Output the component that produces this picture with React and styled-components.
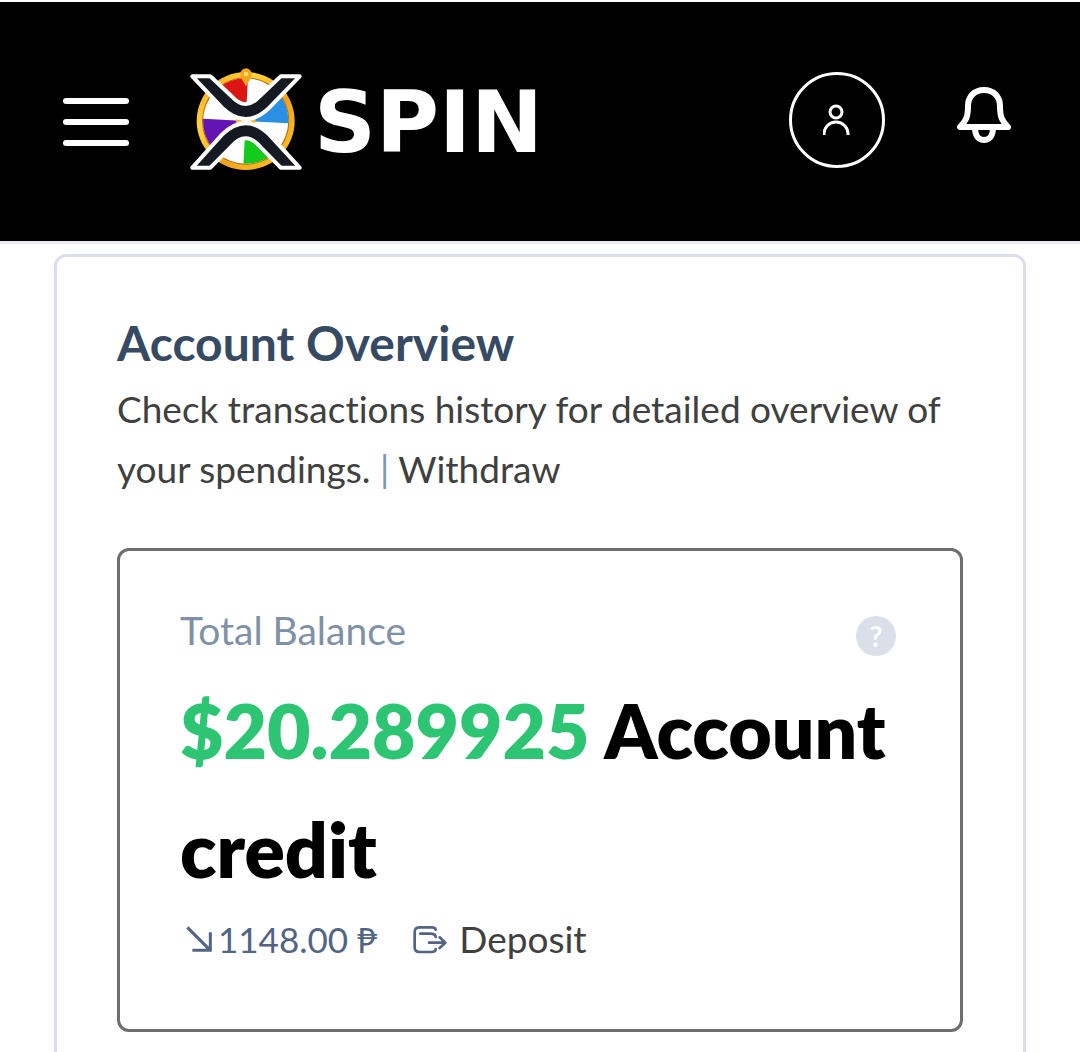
import styled, { createGlobalStyle } from "styled-components";

export default function App(){
    return(
        <>
            <GlobalStyle/>
            <Header>
                <MenuButton aria-label="Menu">
                    <Bar/>
                    <Bar/>
                    <Bar/>
                </MenuButton>
                <Brand href="#home">
                    <WheelLogo/>
                    <BrandName>SPIN</BrandName>
                </Brand>
                <UserButton aria-label="Account">
                    <UserIcon/>
                </UserButton>
                <BellButton aria-label="Notifications">
                    <BellIcon/>
                </BellButton>
            </Header>

            <Overview>
                <Title>Account Overview</Title>
                <Description>
                    Check transactions history for detailed overview of your spendings. <Divider>|</Divider> <TextLink href="#withdraw">Withdraw</TextLink>
                </Description>

                <BalanceCard>
                    <BalanceHead>
                        <Label>Total Balance</Label>
                        <HelpButton aria-label="Help">?</HelpButton>
                    </BalanceHead>
                    <Amount><Money>$20.289925</Money> Account credit</Amount>
                    <BalanceFoot>
                        <Converted>
                            <ArrowIcon/>
                            1148.00 ₱
                        </Converted>
                        <DepositLink href="#deposit">
                            <DepositIcon/>
                            Deposit
                        </DepositLink>
                    </BalanceFoot>
                </BalanceCard>
            </Overview>
        </>
    );
}

function wedge(start){
    const point=(deg)=>{
        const a=deg*Math.PI/180;
        return `${197+128*Math.cos(a)} ${183+128*Math.sin(a)}`;
    };
    return `M197 183L${point(start)}A128 128 0 0 1 ${point(start+45)}Z`;
}

function WheelLogo(){
    return(
        <svg width="112" height="104" viewBox="30 24 336 312" aria-hidden="true">
            <defs>
                <linearGradient id="gold" x1="0" y1="0" x2="1" y2="1">
                    <stop offset="0" stopColor="#f79a1c"/>
                    <stop offset="0.3" stopColor="#ffd53a"/>
                    <stop offset="0.6" stopColor="#f0a51a"/>
                    <stop offset="1" stopColor="#ffc62b"/>
                </linearGradient>
            </defs>
            <circle cx="197" cy="183" r="147" fill="url(#gold)"/>
            <circle cx="197" cy="183" r="131" fill="#b9690d"/>
            <circle cx="197" cy="183" r="128" fill="#fff"/>
            <path d={wedge(228)} fill="#dc1414"/>
            <path d={wedge(-42)} fill="#2b8fe3"/>
            <path d={wedge(48)} fill="#12cb1c"/>
            <path d={wedge(138)} fill="#6514b4"/>
            <circle cx="197" cy="183" r="30" fill="#f0b43c"/>
            <path d="M181 42a17 17 0 0 1 34 0c0 13-10 23-17 37-7-14-17-24-17-37Z" fill="#f5a51d"/>
            <circle cx="198" cy="42" r="7" fill="#ffdf6b"/>
            <g fill="#151a22" stroke="#fff" strokeWidth="12" strokeLinejoin="round">
                <path d="M37 49H91L154 108Q197 156 240 108L302 49H359L268 143Q197 212 126 143Z"/>
                <path d="M37 323H91L154 260Q197 210 240 260L302 323H359L268 224Q197 155 126 224Z"/>
            </g>
        </svg>
    );
}

function UserIcon(){
    return(
        <svg width="28" height="32" viewBox="0 0 28 32" fill="none" stroke="#fff" strokeWidth="3" aria-hidden="true">
            <circle cx="13" cy="8" r="6"/>
            <path d="M1 31v-1a12 12 0 0 1 24 0v1"/>
        </svg>
    );
}

function BellIcon(){
    return(
        <svg width="54" height="58" viewBox="0 0 54 58" fill="none" stroke="#fff" strokeWidth="6" strokeLinejoin="round" aria-hidden="true">
            <path d="M27 4C17 4 11 11 11 20C11 31 9 35 3 41H51C45 35 43 31 43 20C43 11 37 4 27 4Z"/>
            <path d="M18 42C18 50 22 54 27 54C32 54 36 50 36 42"/>
        </svg>
    );
}

function ArrowIcon(){
    return(
        <svg width="26" height="26" viewBox="45 45 78 78" fill="none" stroke="currentColor" strokeWidth="9" aria-hidden="true">
            <path d="M49 49L118 118M64 118H118V64"/>
        </svg>
    );
}

function DepositIcon(){
    return(
        <svg width="34" height="29" viewBox="735 40 102 87" fill="none" stroke="currentColor" strokeWidth="8" strokeLinecap="round" strokeLinejoin="round" aria-hidden="true">
            <path d="M803 54Q801 47 792 47H754Q740 47 740 61V107Q740 121 754 121H790Q803 121 803 112"/>
            <path d="M757 66H788Q803 67 803 76M783 93H831M815 77L832 93L815 109"/>
        </svg>
    );
}

const GlobalStyle=createGlobalStyle`
    *{
        box-sizing: border-box;
    }
    body{
        margin: 0;
        background-color: #fff;
        color: #404040;
        font-family: Lato, "Noto Sans", sans-serif;
        font-size: 37px;
        font-variant-ligatures: none;
        line-height: 60px;
    }
    button{
        padding: 0;
        border: none;
        background: none;
        font-family: inherit;
        cursor: pointer;
    }
    svg{
        display: block;
        flex-shrink: 0;
    }
    a{
        color: inherit;
        text-decoration: none;
    }
`;

const Header=styled.header`
    display: flex;
    align-items: center;
    height: 244px;
    padding: 0 69px 4px 63px;
    background-color: #000;
    border-top: 2px solid #fff;
    border-bottom: 3px solid #ece8f2;
`;

const MenuButton=styled.button`
    display: flex;
    flex-direction: column;
    gap: 15px;
    width: 66px;
    padding-top: 4px;
`;

const Bar=styled.span`
    height: 6px;
    border-radius: 3px;
    background-color: #fff;
`;

const Brand=styled.a`
    display: flex;
    align-items: center;
    gap: 12px;
    margin-left: 61px;
    margin-right: auto;
`;

const BrandName=styled.span`
    padding-top: 4px;
    color: #fff;
    font-family: "DejaVu Sans", sans-serif;
    font-size: 86px;
    font-weight: 700;
    line-height: 100px;
`;

const UserButton=styled.button`
    display: flex;
    align-items: center;
    justify-content: center;
    width: 96px;
    height: 96px;
    border: 3px solid #fff;
    border-radius: 50%;
`;

const BellButton=styled.button`
    margin-left: 72px;
    padding-bottom: 10px;
`;

const Overview=styled.main`
    margin: 10px 54px 0;
    padding: 60px;
    border: 3px solid #dbdfea;
    border-radius: 12px;
`;

const Title=styled.h1`
    margin: 0 0 10px;
    color: #364a63;
    font-size: 48px;
    font-weight: 700;
    line-height: 52px;
`;

const Description=styled.p`
    margin: 0 0 49px;
`;

const Divider=styled.span`
    color: #8094ae;
`;

const TextLink=styled.a`
    color: #404040;
`;

const BalanceCard=styled.section`
    padding: 60px;
    border: 3px solid #6e6e70;
    border-radius: 12px;
`;

const BalanceHead=styled.div`
    display: flex;
    justify-content: space-between;
    height: 60px;
    padding-right: 4px;
`;

const Label=styled.h2`
    margin: 0;
    color: #8091a7;
    font-size: 39px;
    font-weight: 400;
    line-height: 38px;
`;

const HelpButton=styled.button`
    width: 40px;
    height: 40px;
    margin-top: 5px;
    border-radius: 50%;
    background-color: #dbdfea;
    color: #fff;
    font-size: 28px;
    font-weight: 700;
    line-height: 40px;
`;

const Amount=styled.p`
    margin: 0;
    color: #000;
    font-size: 75px;
    font-weight: 800;
    line-height: 119px;
`;

const Money=styled.span`
    color: #2dc573;
`;

const BalanceFoot=styled.div`
    display: flex;
    gap: 36px;
    padding-left: 6px;
`;

const Converted=styled.span`
    display: flex;
    align-items: center;
    gap: 6px;
    color: #526484;
    font-size: 35px;
`;

const DepositLink=styled.a`
    display: flex;
    align-items: center;
    gap: 12px;

    svg{
        color: #526484;
    }
`;
